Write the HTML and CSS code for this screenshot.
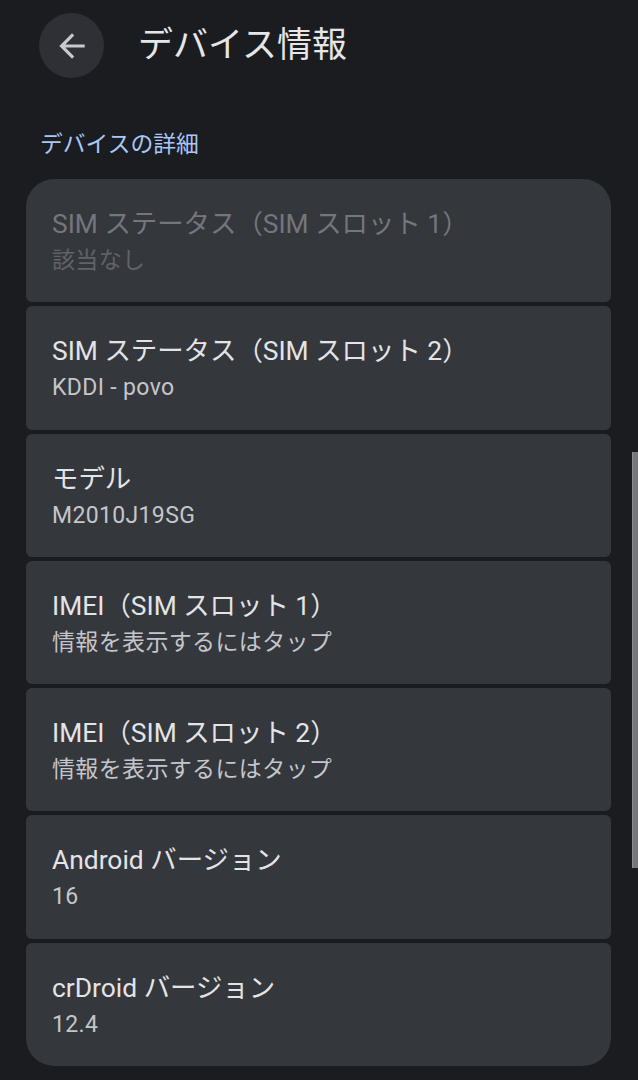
FILE: index.html
```html
<!DOCTYPE html>
<html lang="ja">
<head>
<meta charset="utf-8">
<title>デバイス情報</title>
<link rel="stylesheet" href="styles.css">
</head>
<body>
<div class="screen">
  <header class="topbar">
    <div class="back">
      <svg viewBox="0 0 24 24" width="38" height="38" aria-hidden="true"><path d="M20 11H7.83l5.59-5.59L12 4l-8 8 8 8 1.41-1.41L7.83 13H20v-2z" fill="#c8c9cd"/></svg>
    </div>
    <h1 class="title">デバイス情報</h1>
  </header>
  <h2 class="section">デバイスの詳細</h2>
  <div class="list">
    <div class="item disabled">
      <div class="item-title">SIM ステータス（SIM スロット 1）</div>
      <div class="item-sum">該当なし</div>
    </div>
    <div class="item">
      <div class="item-title">SIM ステータス（SIM スロット 2）</div>
      <div class="item-sum">KDDI - povo</div>
    </div>
    <div class="item">
      <div class="item-title">モデル</div>
      <div class="item-sum">M2010J19SG</div>
    </div>
    <div class="item">
      <div class="item-title">IMEI（SIM スロット 1）</div>
      <div class="item-sum">情報を表示するにはタップ</div>
    </div>
    <div class="item">
      <div class="item-title">IMEI（SIM スロット 2）</div>
      <div class="item-sum">情報を表示するにはタップ</div>
    </div>
    <div class="item">
      <div class="item-title">Android バージョン</div>
      <div class="item-sum">16</div>
    </div>
    <div class="item">
      <div class="item-title">crDroid バージョン</div>
      <div class="item-sum">12.4</div>
    </div>
  </div>
  <div class="scrollthumb"></div>
</div>
</body>
</html>
```
FILE: styles.css
```css
html, body {
  margin: 0;
  padding: 0;
  background: #1a1c20;
}
body {
  font-family: Roboto, "Noto Sans CJK JP", sans-serif;
  color: #e3e3e6;
}
.screen {
  position: relative;
  width: 638px;
  height: 1080px;
  overflow: hidden;
  background: #1a1c20;
}
.topbar {
  display: flex;
  align-items: center;
  height: 65px;
  padding: 13px 0 0 39px;
}
.back {
  width: 65px;
  height: 65px;
  border-radius: 50%;
  background: #2e3035;
  display: flex;
  align-items: center;
  justify-content: center;
}
.back svg {
  display: block;
}
.title {
  margin: 0 0 0 34px;
  font-size: 35px;
  font-weight: 400;
  line-height: 44px;
  color: #e6e6e9;
  letter-spacing: 0;
}
.section {
  margin: 52px 0 0 40px;
  font-size: 22.8px;
  font-weight: 400;
  line-height: 30px;
  color: #a8c7fa;
}
.list {
  margin: 19px 0 0 26px;
  width: 585px;
  display: flex;
  flex-direction: column;
  gap: 4px;
}
.item {
  background: #34373c;
  border-radius: 6px;
  height: 123.3px;
  box-sizing: border-box;
  padding: 27px 26px 0 26px;
}
.item:first-child {
  border-radius: 28px 28px 6px 6px;
}
.item:last-child {
  border-radius: 6px 6px 28px 28px;
}
.item-title {
  font-size: 26.4px;
  line-height: 36px;
  color: #e4e4e7;
  white-space: nowrap;
}
.item-sum {
  font-size: 23px;
  letter-spacing: 0.35px;
  line-height: 37px;
  color: #c4c6cb;
  white-space: nowrap;
}
.item.disabled .item-title {
  color: #74767b;
}
.item.disabled .item-sum {
  color: #616368;
}
.scrollthumb {
  position: absolute;
  left: 632px;
  top: 452px;
  width: 6px;
  height: 416px;
  background: #74777c;
  border-left: 1px solid #8a8d92;
  box-sizing: border-box;
}
```
